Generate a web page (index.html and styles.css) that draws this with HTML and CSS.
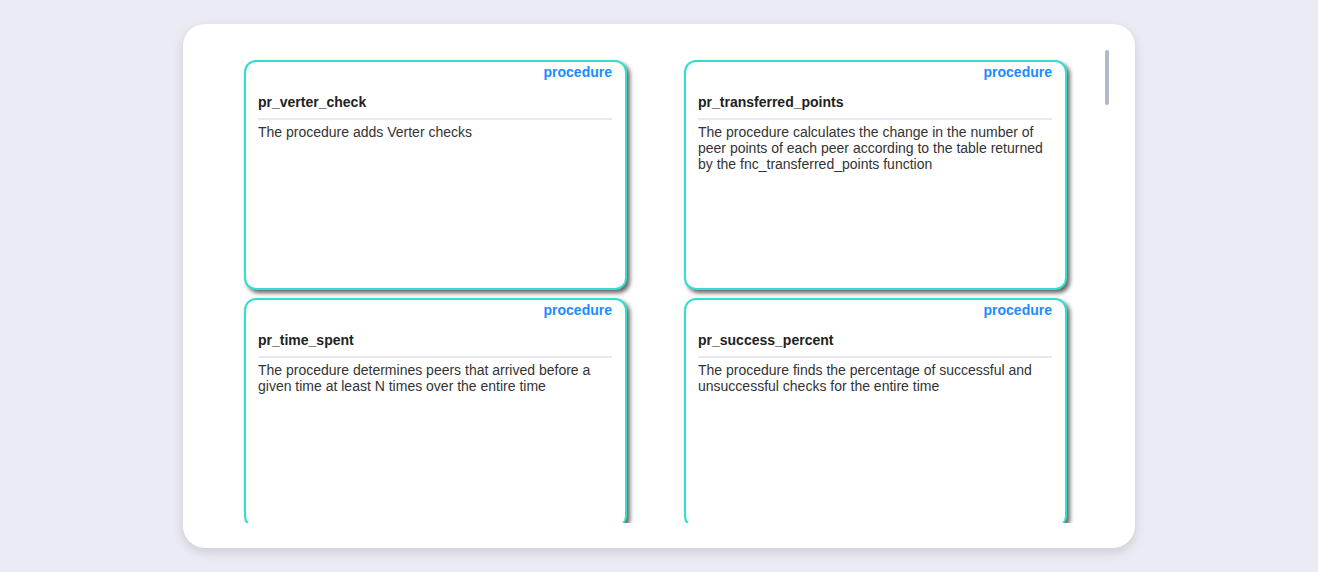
FILE: index.html
```html
<!DOCTYPE html>
<html lang="en">
<head>
<meta charset="utf-8">
<title>Procedures</title>
<link rel="stylesheet" href="styles.css">
</head>
<body>
<main class="panel">
  <div class="scroller">
    <div class="grid">
      <article class="card"><div class="type">procedure</div><h3 class="name">pr_verter_check</h3><p class="desc">The procedure adds Verter checks</p></article>
      <article class="card"><div class="type">procedure</div><h3 class="name">pr_transferred_points</h3><p class="desc">The procedure calculates the change in the number of peer points of each peer according to the table returned by the fnc_transferred_points function</p></article>
      <article class="card"><div class="type">procedure</div><h3 class="name">pr_time_spent</h3><p class="desc">The procedure determines peers that arrived before a given time at least N times over the entire time</p></article>
      <article class="card"><div class="type">procedure</div><h3 class="name">pr_success_percent</h3><p class="desc">The procedure finds the percentage of successful and unsuccessful checks for the entire time</p></article>
    </div>
  </div>
  <div class="track"><div class="thumb"></div></div>
</main>
</body>
</html>
```

FILE: styles.css
```css
* { box-sizing: border-box; }

html, body {
  margin: 0;
  padding: 0;
  background: #eaebf3;
  font-family: "Liberation Sans", Arial, sans-serif;
  height: 572px;
  overflow: hidden;
}

.panel {
  width: 952px;
  height: 524px;
  margin: 24px auto 0;
  background: #ffffff;
  border-radius: 22px;
  box-shadow: 0 4px 12px rgba(0, 0, 0, 0.13);
  padding: 24px 26px 25px 24px;
  display: flex;
}

.scroller {
  flex: 1;
  height: 100%;
  overflow: hidden;
  padding: 12px 0 0 37px;
}

.track {
  width: 4px;
  height: 100%;
  padding-top: 2px;
}

.thumb {
  width: 4px;
  height: 55px;
  border-radius: 2px;
  background: #b0b8cb;
}

.grid {
  display: grid;
  grid-template-columns: 383px 383px;
  column-gap: 57px;
  row-gap: 8px;
}

.card {
  height: 230px;
  border: 2px solid #30e0cc;
  border-radius: 12px;
  background: #fff;
  box-shadow: 3px 3px 4px rgba(0, 0, 0, 0.6);
  padding: 2px 13px 0 12px;
}

.type {
  text-align: right;
  color: #1a8cff;
  font-weight: bold;
  font-size: 14px;
  line-height: 16px;
}

.name {
  margin: 14px 0 0;
  font-size: 14px;
  line-height: 16px;
  font-weight: bold;
  color: #222;
  padding-bottom: 8px;
  border-bottom: 2px solid #e8e8f0;
}

.desc {
  margin: 4px 0 0;
  font-size: 14px;
  line-height: 16px;
  color: #333;
}
```
